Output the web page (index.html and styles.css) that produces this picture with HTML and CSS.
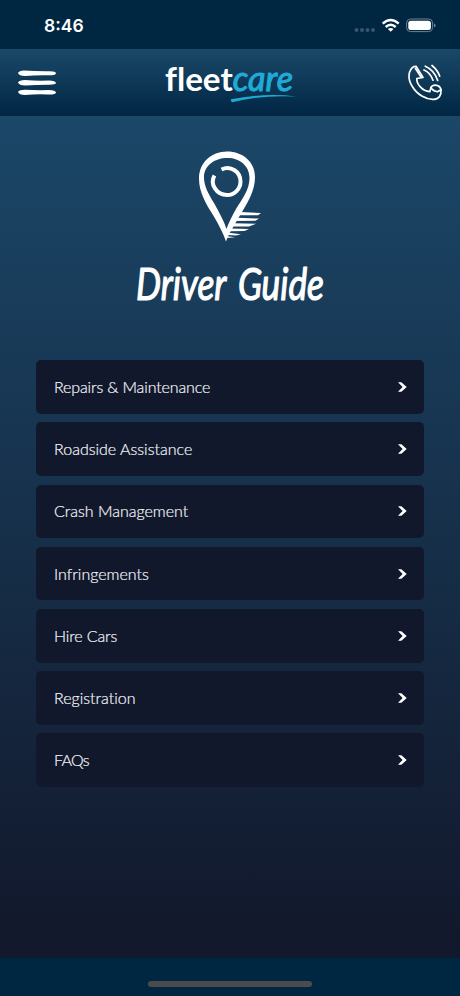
FILE: index.html
```html
<!DOCTYPE html>
<html lang="en">
<head>
<meta charset="utf-8">
<title>Fleetcare Driver Guide</title>
<link rel="stylesheet" href="styles.css">
</head>
<body>
<div class="app">
  <div class="status">
    <span class="time">8:46</span>
    <svg class="indicators" width="84" height="20" viewBox="352 16 84 20">
      <g fill="#36566e"><circle cx="356.500" cy="30" r="2"/><circle cx="362" cy="30" r="2"/><circle cx="367.500" cy="30" r="2"/><circle cx="373" cy="30" r="2"/></g>
      <g fill="none" stroke="#fff" stroke-width="2.500"><path d="M382.700 23.600Q390.700 16.400 398.700 23.600"/><path d="M385.700 27Q390.700 22.600 395.700 27"/></g>
      <path d="M387.900 29Q390.700 26.800 393.500 29L390.700 31.800Z" fill="#fff"/>
      <rect x="406.600" y="19" width="26" height="12.600" rx="4" fill="none" stroke="#6d8393"/>
      <rect x="408.300" y="20.700" width="22.600" height="9.200" rx="2.500" fill="#fff"/>
      <path d="M434 23.200Q435.600 24 435.600 25.300T434 27.400Z" fill="#6d8393"/>
    </svg>
  </div>
  <header class="header">
    <svg class="menu" width="40" height="28" viewBox="17 69 40 28" fill="#fff">
      <path d="M18 73Q19 70.700 24 70.600Q35 71.300 50 71.200Q56 71.300 56 73.400Q55.500 75.300 49 75.300Q36 75 25 76Q19 76 18 73Z"/>
      <path d="M18 82.400Q19 80.300 25 80Q37 81 49 80.500Q55.500 80.700 56 83Q55.500 84.900 48 84.700Q36 84.700 25 85.400Q19 85.400 18 82.400Z"/>
      <path d="M18 92Q19 89.800 25 89.700Q37 90.400 49 90Q55.500 90.200 56 92.500Q55.500 94.800 48 94.500Q36 94 25 95Q19 95 18 92Z"/>
    </svg>
    <svg class="logo" width="144" height="60" viewBox="158 50 144 60">
      <text class="fleet" x="165" y="90.500" textLength="128" lengthAdjust="spacingAndGlyphs">fleet<tspan class="care">care</tspan></text>
      <path d="M231 99.200Q230.500 101 232 102.200Q259 94.800 296 96.500Q266 92.500 231 99.200Z" fill="#20abd7"/>
    </svg>
    <svg class="phone" width="38" height="40" viewBox="406 63 38 40" fill="none" stroke="#fff" stroke-width="1.700" stroke-linecap="round" stroke-linejoin="round">
      <path d="M414 66.500C408 70 407.500 79 412 86C417 94.500 426 100 434 99.300C439 99 441.500 95 441 89.800C440.600 86 436 84 432.500 85.700C430.500 86.800 430.500 89 429.800 91.700C422 91 416.500 84 416.800 78.500L423 77.500L416 66.300Z"/>
      <path d="M415.300 68.200L421.200 77.300M430.800 87.500Q433 91.200 437.500 91.700L441 89.700"/>
      <path d="M424 70Q430.500 72.800 433 80.200M425.300 66.200Q434.500 70.200 437.700 80.500M432 65.500Q437.500 70 439.700 76.200"/>
    </svg>
  </header>
  <main class="content">
    <svg class="hero" width="240" height="180" viewBox="110 145 240 180">
      <g fill="#fff">
        <path fill-rule="evenodd" d="M227 151.500C211 151.500 199 163 199 178.500C199 192 205.500 203 213 215C219 225 223.500 234 226 241.500C228.500 234 234 226 239 217C247 203 255 192 255 177C255 162 243 151.500 227 151.500ZM227.500 158C240 158 249.500 166 249.500 178C249.500 190 242 199 236 209C232 216 228.500 223 226.500 229C224 221 219 212 214 203C208 193 204 186 204 177C204 166 214 158 227.500 158Z"/>
        <path d="M240 212L261 213L258 215.300L238 215.300ZM237 217.800L259 218.600L255.500 220.800L235 221ZM234 223.300L256 223.800L249 226.600L232 226.600ZM231 228.500L249 229L244.500 231L229.500 231.300ZM229 232.800L241 234.200L236 235.500L228 235ZM227.500 236.200L235 237.200L227 238Z"/>
      </g>
      <path d="M221.500 169.500C231 165 240.500 172 240.500 181.500C240.500 189 234.500 195 227 195C216.500 195 209.500 184 214.500 175.500" fill="none" stroke="#fff" stroke-width="4"/>
      <text class="title" x="136" y="299.500" textLength="188" lengthAdjust="spacingAndGlyphs">Driver Guide</text>
    </svg>
    <nav class="list">
      <a class="row"><span class="snug">Repairs &amp; Maintenance</span><svg class="chev" viewBox="0 0 10 10"><path d="M1 0.300H4.400L9.700 5L4.400 9.700H1L5.600 5Z"/></svg></a>
      <a class="row"><span>Roadside Assistance</span><svg class="chev" viewBox="0 0 10 10"><path d="M1 0.300H4.400L9.700 5L4.400 9.700H1L5.600 5Z"/></svg></a>
      <a class="row"><span>Crash Management</span><svg class="chev" viewBox="0 0 10 10"><path d="M1 0.300H4.400L9.700 5L4.400 9.700H1L5.600 5Z"/></svg></a>
      <a class="row"><span>Infringements</span><svg class="chev" viewBox="0 0 10 10"><path d="M1 0.300H4.400L9.700 5L4.400 9.700H1L5.600 5Z"/></svg></a>
      <a class="row"><span class="snug">Hire Cars</span><svg class="chev" viewBox="0 0 10 10"><path d="M1 0.300H4.400L9.700 5L4.400 9.700H1L5.600 5Z"/></svg></a>
      <a class="row"><span>Registration</span><svg class="chev" viewBox="0 0 10 10"><path d="M1 0.300H4.400L9.700 5L4.400 9.700H1L5.600 5Z"/></svg></a>
      <a class="row"><span class="tight">FAQs</span><svg class="chev" viewBox="0 0 10 10"><path d="M1 0.300H4.400L9.700 5L4.400 9.700H1L5.600 5Z"/></svg></a>
    </nav>
  </main>
  <footer class="footer"><div class="home"></div></footer>
</div>
</body>
</html>
```
FILE: styles.css
```css
* { box-sizing: border-box; }
body { margin: 0; background: #002742; }
.app { width: 460px; height: 996px; display: flex; flex-direction: column; color: #fff; }
.status { height: 49px; background: #002742; display: flex; justify-content: space-between; padding: 16px 24px 0 44px; }
.time { font: 600 17.500px/20px Inter, sans-serif; }
.header { height: 67px; background: linear-gradient(#1b4868, #002744); display: flex; justify-content: space-between; padding: 0 16px 0 17px; }
.menu { margin-top: 20px; }
.logo { margin: 1px 0 0 -3px; }
.phone { margin-top: 14px; }
.fleet { font: 700 33px Lato, sans-serif; font-variant-ligatures: none; fill: #fff; }
.care { font-style: italic; font-weight: 400; fill: #20abd7; stroke: #20abd7; stroke-width: 1; font-size: 34px; }
.content { height: 842px; background: linear-gradient(#1b4768, #12192d 96%); display: flex; flex-direction: column; align-items: center; padding-top: 29px; }
.hero { display: block; }
.title { font: italic 400 45px Lato, sans-serif; word-spacing: 5px; fill: #fff; stroke: #fff; stroke-width: 1.200; stroke-linejoin: round; }
.list { width: 388px; margin-top: 35.300px; display: flex; flex-direction: column; gap: 8.700px; }
.row { height: 53.500px; border-radius: 5px; background: #12182b; display: flex; align-items: center; justify-content: space-between; padding: 0 17px 0 18px; font: 300 16px/20px Lato, sans-serif; font-variant-ligatures: none; color: #f4f6fb; -webkit-text-stroke: 0.200px #f4f6fb; }
.snug { letter-spacing: -0.140px; }
.tight { letter-spacing: -0.700px; }
.chev { width: 10px; height: 10px; fill: #fff; }
.footer { flex: 1; background: #002742; display: flex; justify-content: center; padding-top: 23px; }
.home { width: 164px; height: 6px; border-radius: 3px; background: #4b4b4b; }
```
